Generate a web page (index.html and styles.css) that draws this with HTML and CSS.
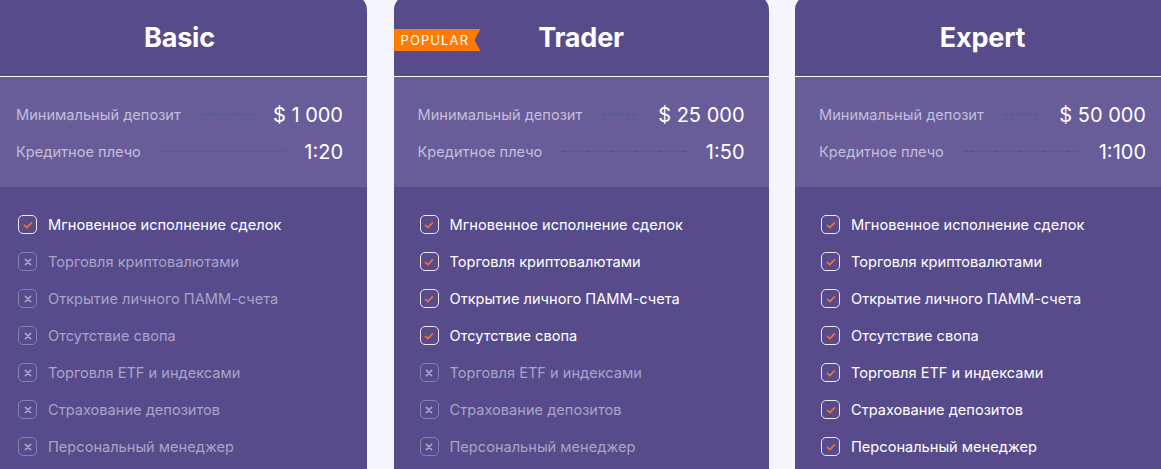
FILE: index.html
```html
<!DOCTYPE html>
<html lang="ru">
<head>
<meta charset="utf-8">
<title>Тарифы</title>
<link rel="stylesheet" href="styles.css">
</head>
<body>
<div class="plans">

  <div class="card">
    <div class="card-head"><h2 class="title">Basic</h2></div>
    <div class="card-info">
      <div class="info-row"><span class="label">Минимальный депозит</span><span class="dots"></span><span class="value">$ 1 000</span></div>
      <div class="info-row"><span class="label">Кредитное плечо</span><span class="dots"></span><span class="value">1:20</span></div>
    </div>
    <ul class="features">
      <li class="feat on"><span class="box"><svg viewBox="0 0 16 16"><path d="M4.4 8.4 L6.8 10.6 L11.4 5.9"/></svg></span>Мгновенное исполнение сделок</li>
      <li class="feat off"><span class="box"><svg viewBox="0 0 16 16"><path d="M5.4 5.4 L10.6 10.6 M10.6 5.4 L5.4 10.6"/></svg></span>Торговля криптовалютами</li>
      <li class="feat off"><span class="box"><svg viewBox="0 0 16 16"><path d="M5.4 5.4 L10.6 10.6 M10.6 5.4 L5.4 10.6"/></svg></span>Открытие личного ПАММ-счета</li>
      <li class="feat off"><span class="box"><svg viewBox="0 0 16 16"><path d="M5.4 5.4 L10.6 10.6 M10.6 5.4 L5.4 10.6"/></svg></span>Отсутствие свопа</li>
      <li class="feat off"><span class="box"><svg viewBox="0 0 16 16"><path d="M5.4 5.4 L10.6 10.6 M10.6 5.4 L5.4 10.6"/></svg></span>Торговля ETF и индексами</li>
      <li class="feat off"><span class="box"><svg viewBox="0 0 16 16"><path d="M5.4 5.4 L10.6 10.6 M10.6 5.4 L5.4 10.6"/></svg></span>Страхование депозитов</li>
      <li class="feat off"><span class="box"><svg viewBox="0 0 16 16"><path d="M5.4 5.4 L10.6 10.6 M10.6 5.4 L5.4 10.6"/></svg></span>Персональный менеджер</li>
    </ul>
  </div>

  <div class="card">
    <span class="badge">POPULAR</span>
    <div class="card-head"><h2 class="title">Trader</h2></div>
    <div class="card-info">
      <div class="info-row"><span class="label">Минимальный депозит</span><span class="dots"></span><span class="value">$ 25 000</span></div>
      <div class="info-row"><span class="label">Кредитное плечо</span><span class="dots"></span><span class="value">1:50</span></div>
    </div>
    <ul class="features">
      <li class="feat on"><span class="box"><svg viewBox="0 0 16 16"><path d="M4.4 8.4 L6.8 10.6 L11.4 5.9"/></svg></span>Мгновенное исполнение сделок</li>
      <li class="feat on"><span class="box"><svg viewBox="0 0 16 16"><path d="M4.4 8.4 L6.8 10.6 L11.4 5.9"/></svg></span>Торговля криптовалютами</li>
      <li class="feat on"><span class="box"><svg viewBox="0 0 16 16"><path d="M4.4 8.4 L6.8 10.6 L11.4 5.9"/></svg></span>Открытие личного ПАММ-счета</li>
      <li class="feat on"><span class="box"><svg viewBox="0 0 16 16"><path d="M4.4 8.4 L6.8 10.6 L11.4 5.9"/></svg></span>Отсутствие свопа</li>
      <li class="feat off"><span class="box"><svg viewBox="0 0 16 16"><path d="M5.4 5.4 L10.6 10.6 M10.6 5.4 L5.4 10.6"/></svg></span>Торговля ETF и индексами</li>
      <li class="feat off"><span class="box"><svg viewBox="0 0 16 16"><path d="M5.4 5.4 L10.6 10.6 M10.6 5.4 L5.4 10.6"/></svg></span>Страхование депозитов</li>
      <li class="feat off"><span class="box"><svg viewBox="0 0 16 16"><path d="M5.4 5.4 L10.6 10.6 M10.6 5.4 L5.4 10.6"/></svg></span>Персональный менеджер</li>
    </ul>
  </div>

  <div class="card">
    <div class="card-head"><h2 class="title">Expert</h2></div>
    <div class="card-info">
      <div class="info-row"><span class="label">Минимальный депозит</span><span class="dots"></span><span class="value">$ 50 000</span></div>
      <div class="info-row"><span class="label">Кредитное плечо</span><span class="dots"></span><span class="value">1:100</span></div>
    </div>
    <ul class="features">
      <li class="feat on"><span class="box"><svg viewBox="0 0 16 16"><path d="M4.4 8.4 L6.8 10.6 L11.4 5.9"/></svg></span>Мгновенное исполнение сделок</li>
      <li class="feat on"><span class="box"><svg viewBox="0 0 16 16"><path d="M4.4 8.4 L6.8 10.6 L11.4 5.9"/></svg></span>Торговля криптовалютами</li>
      <li class="feat on"><span class="box"><svg viewBox="0 0 16 16"><path d="M4.4 8.4 L6.8 10.6 L11.4 5.9"/></svg></span>Открытие личного ПАММ-счета</li>
      <li class="feat on"><span class="box"><svg viewBox="0 0 16 16"><path d="M4.4 8.4 L6.8 10.6 L11.4 5.9"/></svg></span>Отсутствие свопа</li>
      <li class="feat on"><span class="box"><svg viewBox="0 0 16 16"><path d="M4.4 8.4 L6.8 10.6 L11.4 5.9"/></svg></span>Торговля ETF и индексами</li>
      <li class="feat on"><span class="box"><svg viewBox="0 0 16 16"><path d="M4.4 8.4 L6.8 10.6 L11.4 5.9"/></svg></span>Страхование депозитов</li>
      <li class="feat on"><span class="box"><svg viewBox="0 0 16 16"><path d="M4.4 8.4 L6.8 10.6 L11.4 5.9"/></svg></span>Персональный менеджер</li>
    </ul>
  </div>

</div>
</body>
</html>
```

FILE: styles.css
```css
html, body {
  margin: 0;
  padding: 0;
}
body {
  background: #f4f5fd;
  font-family: Inter, "Noto Sans", sans-serif;
  overflow: hidden;
  width: 1161px;
  height: 469px;
}
.plans {
  display: flex;
  gap: 26.5px;
  margin-left: -8px;
  margin-top: -5px;
}
.card {
  position: relative;
  flex: 0 0 375px;
  width: 375px;
  height: 474px;
  background: #574b8b;
  border-radius: 15px 15px 0 0;
  overflow: hidden;
}
.card-head {
  height: 82px;
  box-sizing: border-box;
  border-bottom: 1px solid #ffffff;
  display: flex;
  align-items: center;
  justify-content: center;
  padding-top: 4px;
}
.title {
  margin: 0;
  color: #ffffff;
  font-size: 27px;
  font-weight: 700;
  letter-spacing: -0.2px;
}
.badge {
  position: absolute;
  left: 0;
  top: 34px;
  width: 87px;
  height: 22px;
  box-sizing: border-box;
  padding-left: 7px;
  background: #ff7b00;
  color: #ffffff;
  font-size: 13px;
  line-height: 22px;
  letter-spacing: 1.1px;
  font-weight: 400;
  clip-path: polygon(0 0, 100% 0, calc(100% - 6px) 50%, 100% 100%, 0 100%);
}
.card-info {
  background: #695d99;
  padding: 19px 24px 17px;
  height: 110px;
  box-sizing: border-box;
}
.info-row {
  display: flex;
  align-items: center;
  height: 37px;
}
.label {
  color: #c3bddb;
  font-size: 14.6px;
  white-space: nowrap;
}
.dots {
  flex: 1;
  height: 1px;
  margin: 0 20px;
  background: repeating-linear-gradient(90deg, #4e5a8e 0 4px, transparent 4px 6px);
}
.value {
  color: #ffffff;
  font-size: 20px;
  font-weight: 400;
  white-space: nowrap;
}
.features {
  list-style: none;
  margin: 0;
  padding: 19px 0 0 26px;
}
.feat {
  display: flex;
  align-items: center;
  height: 37px;
  font-size: 14.6px;
}
.box {
  width: 19px;
  height: 19px;
  box-sizing: border-box;
  border-radius: 5px;
  margin-right: 11px;
  display: flex;
  align-items: center;
  justify-content: center;
  flex-shrink: 0;
}
.box svg {
  width: 16px;
  height: 16px;
  fill: none;
  stroke-linecap: round;
  stroke-linejoin: round;
}
.feat.on {
  color: #ffffff;
}
.feat.on .box {
  border: 1.5px solid #ece8f6;
}
.feat.on .box svg {
  stroke: #f0703a;
  stroke-width: 1.7;
}
.feat.off {
  color: #aaa3c9;
}
.feat.off .box {
  border: 1.5px solid #8880b3;
}
.feat.off .box svg {
  stroke: #aaa3c9;
  stroke-width: 1.6;
}
```
